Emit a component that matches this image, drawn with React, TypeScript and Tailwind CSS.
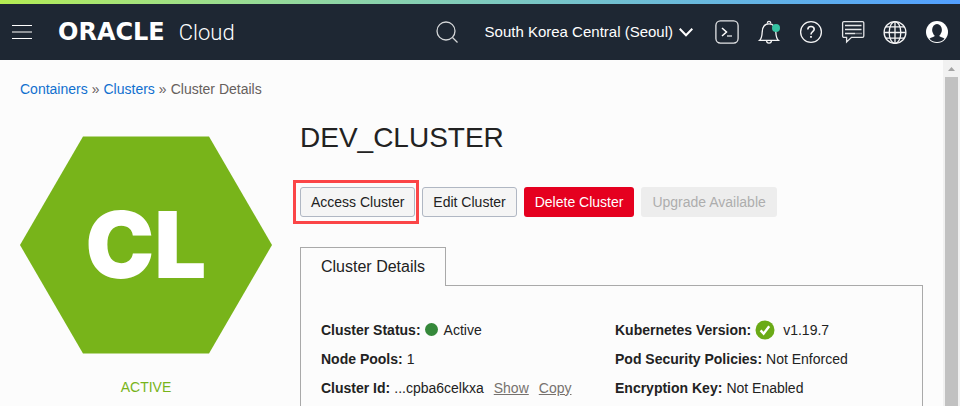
import type { ReactNode } from 'react';

function IconButton({ label, children }: { label: string; children: ReactNode }) {
  return (
    <button type="button" aria-label={label} className="flex size-6 items-center justify-center">
      {children}
    </button>
  );
}

function MenuIcon() {
  return (
    <svg viewBox="0 0 20 14" className="h-[14px] w-5" shapeRendering="crispEdges">
      <rect x="0" y="0" width="20" height="1" fill="#ffffff" />
      <rect x="0" y="6" width="20" height="2" fill="#8f9398" />
      <rect x="0" y="13" width="20" height="1" fill="#ffffff" />
    </svg>
  );
}

function SearchIcon() {
  return (
    <svg viewBox="0 0 24 24" className="size-6" fill="none" stroke="#d4d6d8" strokeWidth="1.3">
      <circle cx="11" cy="11" r="9" />
      <path d="M17.500 17.500l5 5" />
    </svg>
  );
}

function ConsoleIcon() {
  return (
    <svg viewBox="0 0 24 24" className="size-6" fill="none" stroke="#e4e5e7" strokeWidth="1.3">
      <rect x="0.9" y="0.9" width="22.2" height="22.2" rx="4.5" />
      <path d="M7 8l4.5 4L7 16" stroke="#ffffff" strokeWidth="1.500" />
      <path d="M12 16h5" />
    </svg>
  );
}

function BellIcon() {
  return (
    <svg viewBox="0 0 24 24" className="size-6" fill="none" stroke="#f4f4f5" strokeWidth="1.3">
      <path d="M10.400 3.600V2.900a1.600 1.600 0 1 1 3.200 0v.7" />
      <path d="M2.500 20.400h19c-2.300-2-2.500-4-2.700-8.400C18.600 6.800 16.200 3.800 12 3.800S5.400 6.800 5.200 12c-.2 4.400-.4 6.400-2.700 8.400z" />
      <path d="M9.600 20.700a2.400 2.400 0 0 0 4.800 0" />
      <circle cx="19" cy="8" r="4" fill="#36c4a3" stroke="none" />
    </svg>
  );
}

function HelpIcon() {
  return (
    <svg viewBox="0 0 24 24" className="size-6" fill="none" stroke="#f4f4f5" strokeWidth="1.3">
      <circle cx="12" cy="12" r="10.400" />
      <path d="M8.800 9.600c0-2 1.300-3.100 3.200-3.100s3.200 1.100 3.200 2.800c0 2.400-3.200 2.500-3.200 5.200" strokeWidth="1.600" />
      <path d="M12 16v1.800" strokeWidth="1.800" />
    </svg>
  );
}

function ChatIcon() {
  return (
    <svg viewBox="0 0 24 24" className="size-6" fill="none" stroke="#e4e5e7" strokeWidth="1.300">
      <path d="M3 1.700h18.500a1.300 1.300 0 0 1 1.300 1.300v13a1.300 1.300 0 0 1-1.300 1.300H10.500L5.600 22v-4.700H3A1.300 1.300 0 0 1 1.600 16V3A1.300 1.300 0 0 1 3 1.700z" />
      <path d="M4 5.500h16.500M4 9.500h16.500M4 13.500h10.500" />
      <path d="M15.500 13.500h5" strokeDasharray="1 1" />
    </svg>
  );
}

function GlobeIcon() {
  return (
    <svg viewBox="0 0 24 24" className="size-6" fill="none" stroke="#f4f4f5" strokeWidth="1.300">
      <circle cx="12" cy="12.500" r="10.900" />
      <ellipse cx="12" cy="12.500" rx="5.800" ry="10.900" />
      <path d="M12 1.600v21.800M1.100 12.500h21.800M3 6.800h18M3 18.200h18" />
    </svg>
  );
}

function ProfileIcon() {
  return (
    <svg viewBox="0 0 24 24" className="size-6">
      <circle cx="12" cy="12" r="11" fill="#ffffff" />
      <ellipse cx="12" cy="10" rx="4.900" ry="5.900" fill="#1e2733" />
      <path d="M9.500 14h5v2.200c1.800 1 4 1.300 5 2.600A10 10 0 0 1 12 22a10 10 0 0 1-7.500-3.200c1-1.300 3.200-1.600 5-2.600z" fill="#1e2733" />
    </svg>
  );
}

function Header() {
  return (
    <header>
      <div className="h-1 bg-linear-to-r from-[#b4ec51] to-[#529fff]" />
      <div className="flex h-14 items-center bg-[#1e2733] pr-[11px] pl-3 text-white">
        <button type="button" aria-label="Menu" className="flex">
          <MenuIcon />
        </button>
        <a href="#home" className="ml-[26px] flex items-baseline gap-3.5 leading-7">
          <span className="font-['DejaVu_Sans',sans-serif] text-[24px] font-bold">ORACLE</span>
          <span className="font-[Roboto,sans-serif] text-[22px] font-light">Cloud</span>
        </a>
        <button type="button" aria-label="Search" className="ml-auto flex">
          <SearchIcon />
        </button>
        <div className="relative ml-[26px] flex items-center">
          <select
            aria-label="Region"
            className="field-sizing-content appearance-none bg-transparent pr-5 text-[15px] leading-5 text-white"
          >
            <option>South Korea Central (Seoul)</option>
          </select>
          <svg
            viewBox="0 0 14 9"
            className="pointer-events-none absolute right-0 h-[9px] w-[14px]"
            fill="none"
            stroke="#ffffff"
            strokeWidth="2"
          >
            <path d="M0.700 0.800L7 7.200l6.300-6.400" />
          </svg>
        </div>
        <nav aria-label="Tools" className="ml-[22px] flex gap-[18px]">
          <IconButton label="Developer tools"><ConsoleIcon /></IconButton>
          <IconButton label="Notifications"><BellIcon /></IconButton>
          <IconButton label="Help"><HelpIcon /></IconButton>
          <IconButton label="Chat"><ChatIcon /></IconButton>
          <IconButton label="Language"><GlobeIcon /></IconButton>
          <IconButton label="Profile"><ProfileIcon /></IconButton>
        </nav>
      </div>
    </header>
  );
}

function Breadcrumb() {
  return (
    <nav aria-label="Breadcrumb" className="flex gap-1 leading-5 text-[#66605c]">
      <a href="#containers" className="text-[#1170cf]">Containers</a>
      <span>»</span>
      <a href="#clusters" className="text-[#1170cf]">Clusters</a>
      <span>»</span>
      <span>Cluster Details</span>
    </nav>
  );
}

function ClusterBadge() {
  return (
    <div className="w-[252px] shrink-0 text-center">
      <svg viewBox="0 0 252 218" className="block h-[218px] w-full">
        <path d="M63 0.500h126l63 108.500-63 108.500H63L0 109z" fill="#78b41a" />
        <text
          x="126"
          y="142"
          textAnchor="middle"
          fill="#ffffff"
          className="font-[Inter,sans-serif] text-[92px] font-black"
        >
          CL
        </text>
      </svg>
      <p className="mt-[23px] leading-5 text-[#78b41a]">ACTIVE</p>
    </div>
  );
}

function Actions() {
  return (
    <div className="flex gap-[7px]">
      <div className="relative">
        <button type="button" className="h-[30px] rounded-[3px] border border-[#b0b7c3] bg-[#f5f5f5] px-2.5">
          Access Cluster
        </button>
        <div className="pointer-events-none absolute -inset-y-[7px] -right-1 -left-[7px] border-3 border-[#fb4547]" />
      </div>
      <button type="button" className="h-[30px] rounded-[3px] border border-[#b0b7c3] bg-[#f5f5f5] px-2.5">
        Edit Cluster
      </button>
      <button type="button" className="h-[30px] rounded-[3px] bg-[#e5001f] px-[11px] text-white">
        Delete Cluster
      </button>
      <button type="button" disabled className="h-[30px] rounded-[3px] bg-[#ededed] px-[11px] text-[#adadad]">
        Upgrade Available
      </button>
    </div>
  );
}

function Field({ label, children }: { label: string; children: ReactNode }) {
  return (
    <div className="flex h-[29px] items-center gap-1">
      <dt className="font-bold">{label}:</dt>
      <dd className="flex items-center">{children}</dd>
    </div>
  );
}

function DetailsPanel() {
  return (
    <section className="flex flex-1 flex-col">
      <div role="tablist" className="flex">
        <button
          type="button"
          role="tab"
          aria-selected="true"
          className="h-[39px] border-x border-t border-[#a9a9a9] px-5 text-base"
        >
          Cluster Details
        </button>
        <div className="flex-1 border-b border-[#a9a9a9]" />
      </div>
      <div role="tabpanel" className="grid flex-1 grid-cols-2 content-start gap-[7px] border-x border-[#a9a9a9] px-5 pt-[29px]">
        <dl>
          <Field label="Cluster Status">
            <span className="mr-1.5 size-[13px] rounded-full bg-[#35883a]" />
            Active
          </Field>
          <Field label="Node Pools">1</Field>
          <Field label="Cluster Id">
            <span>...cpba6celkxa</span>
            <a href="#show" className="ml-2.5 text-[#77726e] underline">Show</a>
            <a href="#copy" className="ml-2.5 text-[#77726e] underline">Copy</a>
          </Field>
        </dl>
        <dl>
          <Field label="Kubernetes Version">
            <svg viewBox="0 0 20 20" className="mr-2 size-5">
              <circle cx="10" cy="10" r="9.500" fill="#6aaa16" />
              <path d="M5.600 10.400l3 3.200 5.600-7.400" fill="none" stroke="#ffffff" strokeWidth="2.400" />
            </svg>
            v1.19.7
          </Field>
          <Field label="Pod Security Policies">Not Enforced</Field>
          <Field label="Encryption Key">Not Enabled</Field>
        </dl>
      </div>
    </section>
  );
}

function ScrollRail() {
  return (
    <div aria-hidden="true" className="flex w-[17px] shrink-0 flex-col items-center bg-[#f1f1f1]">
      <svg viewBox="0 0 17 17" className="size-[17px]">
        <path d="M5 11l3.500-4 3.500 4z" fill="#a3a3a3" />
      </svg>
      <div className="w-[13px] flex-1 bg-[#c1c1c1]" />
    </div>
  );
}

export default function App() {
  return (
    <div className="flex min-h-screen flex-col bg-[#fcfcfc] font-['Liberation_Sans',Arial,sans-serif] text-sm text-[#222222]">
      <Header />
      <div className="flex flex-1">
        <main className="flex min-w-0 flex-1 flex-col px-5 pt-[19px]">
          <Breadcrumb />
          <div className="flex flex-1 gap-7">
            <div className="pt-[37px]">
              <ClusterBadge />
            </div>
            <div className="flex min-w-0 flex-1 flex-col pt-[23px]">
              <h1 className="mb-[33px] text-[28px] leading-8">DEV_CLUSTER</h1>
              <Actions />
              <div className="mt-[30px] flex flex-1 flex-col">
                <DetailsPanel />
              </div>
            </div>
          </div>
        </main>
        <ScrollRail />
      </div>
    </div>
  );
}
